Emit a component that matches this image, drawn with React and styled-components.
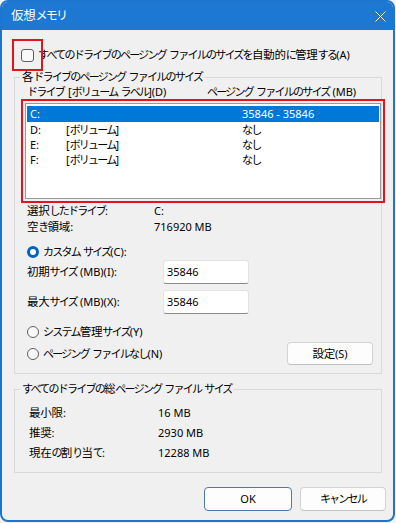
import React from 'react'
import styled, { createGlobalStyle } from 'styled-components'

const GlobalStyle = createGlobalStyle`
  html, body {
    margin: 0;
    padding: 0;
    background: #f3f3f3;
  }
  body {
    font-family: "Noto Sans", "Noto Sans CJK JP", sans-serif;
    font-size: 11px;
    color: #000;
  }
`

// Japanese runs: kana is set tighter than kanji, close to Yu Gothic UI widths
const Kana = styled.span`
  font-family: "Noto Sans CJK JP", sans-serif;
  font-size: ${p => p.$size || 11}px;
  letter-spacing: -1.75px;
  line-height: 1;
`

const Kanji = styled.span`
  font-family: "Noto Sans CJK JP", sans-serif;
  font-size: ${p => (p.$size ? p.$size + 0.5 : 11.5)}px;
  letter-spacing: -0.2px;
  line-height: 1;
`

const KANA = /[\u3040-\u30ff]/
const KANJI = /[\u4e00-\u9fff]/

function J({ children, size }) {
  const runs = []
  let buf = ''
  let kind = null
  const flush = () => {
    if (!buf) return
    const key = runs.length
    if (kind === 'kana') runs.push(<Kana key={key} $size={size}>{buf}</Kana>)
    else if (kind === 'kanji') runs.push(<Kanji key={key} $size={size}>{buf}</Kanji>)
    else runs.push(<React.Fragment key={key}>{buf}</React.Fragment>)
    buf = ''
  }
  for (const ch of String(children)) {
    const k = KANA.test(ch) ? 'kana' : KANJI.test(ch) ? 'kanji' : 'latin'
    if (k !== kind) flush()
    kind = k
    buf += ch
  }
  flush()
  return <>{runs}</>
}

const Window = styled.div`
  width: 395px;
  height: 522px;
  box-sizing: border-box;
  border: 2px solid #1c76cf;
  border-radius: 8px;
  overflow: hidden;
  display: flex;
  flex-direction: column;
  background: #f0f0f0;
`

const TitleBar = styled.div`
  height: 28px;
  flex: none;
  background: #1c78d2;
  color: #fff;
  display: flex;
  align-items: center;
  justify-content: space-between;
  padding: 0 7px 0 9px;
  line-height: 16px;
  svg {
    display: block;
  }
`

const Body = styled.div`
  flex: 1;
  padding: 0 7px 0 12px;
  display: flex;
  flex-direction: column;
`

const CheckRow = styled.label`
  margin: 18px 0 0 7px;
  height: 14px;
  display: flex;
  align-items: center;
  gap: 4px;
  line-height: 14px;
  white-space: nowrap;
`

const Marked = styled.span`
  position: relative;
  display: inline-flex;
  &::after {
    content: '';
    position: absolute;
    inset: ${p => p.$inset};
    border: 2px solid #e3141b;
    pointer-events: none;
  }
`

const CheckBox = styled.span`
  width: 13px;
  height: 13px;
  box-sizing: border-box;
  border: 1px solid #5f5f5f;
  border-radius: 3px;
  background: #f9f9f9;
`

const Group = styled.fieldset`
  margin: ${p => p.$top}px 4px 0 0;
  padding: 0;
  border: 1px solid #d9d9d9;
  min-width: 0;
  legend {
    margin-left: 5px;
    padding: 0 2px;
    line-height: 14px;
    white-space: nowrap;
  }
`

const GroupBody = styled.div`
  padding: ${p => p.$pad};
`

const HeaderRow = styled.div`
  display: grid;
  grid-template-columns: 41px 139px 1fr;
  line-height: 14px;
  height: 14px;
  white-space: nowrap;
`

const ListWrap = styled(Marked)`
  display: block;
  margin: 4px 0 0 -2px;
`

const ListBox = styled.div`
  height: 96px;
  box-sizing: border-box;
  border: 1px solid #9a9a9a;
  background: #fff;
  padding: 2px 1px 0;
`

const DriveRow = styled.div`
  display: grid;
  grid-template-columns: 36px 176px 1fr;
  padding-left: 3px;
  height: 15px;
  line-height: 15px;
  white-space: nowrap;
  background: ${p => (p.$selected ? '#0078d7' : 'transparent')};
  color: ${p => (p.$selected ? '#fff' : '#000')};
  &:first-child {
    height: 16px;
    line-height: 16px;
  }
`

const InfoRow = styled.div`
  display: grid;
  grid-template-columns: ${p => p.$label}px 1fr;
  line-height: ${p => p.$lh}px;
  height: ${p => p.$lh}px;
  margin-top: ${p => p.$top || 0}px;
  white-space: nowrap;
`

const RadioRow = styled.label`
  display: flex;
  align-items: center;
  gap: 4px;
  height: 16px;
  line-height: 16px;
  margin-top: ${p => p.$top}px;
  white-space: nowrap;
`

const Radio = styled.span`
  width: 12px;
  height: 12px;
  box-sizing: border-box;
  border-radius: 50%;
  border: ${p => (p.$on ? '3.5px solid #0065c2' : '1px solid #5f5f5f')};
  background: ${p => (p.$on ? '#fff' : '#f9f9f9')};
`

const SizeRow = styled.div`
  display: grid;
  grid-template-columns: 136px 86px;
  align-items: center;
  margin-top: ${p => p.$top}px;
  white-space: nowrap;
  line-height: 14px;
`

const TextInput = styled.div`
  height: 24px;
  box-sizing: border-box;
  background: #fff;
  border: 1px solid #e2e2e2;
  border-bottom-color: #8a8a8a;
  border-radius: 3px;
  padding: 4px 0 0 3px;
  line-height: 14px;
`

const BottomRow = styled.div`
  display: flex;
  align-items: center;
  justify-content: space-between;
  margin: 2px 8px 0 0;
`

const Button = styled.button`
  font: inherit;
  color: #000;
  width: ${p => p.$w}px;
  height: ${p => p.$h}px;
  box-sizing: border-box;
  background: #fdfdfd;
  border: 1px solid ${p => (p.$default ? '#4f7aa3' : '#d3d3d3')};
  border-bottom-color: ${p => (p.$default ? '#4f7aa3' : '#c2c2c2')};
  border-radius: 4px;
  padding: 0;
  line-height: 14px;
`

const Footer = styled.div`
  display: flex;
  justify-content: flex-end;
  gap: 8px;
  margin-top: 14px;
`

const drives = [
  { d: 'C:', label: '', size: '35846 - 35846' },
  { d: 'D:', label: '[ボリューム]', size: 'なし' },
  { d: 'E:', label: '[ボリューム]', size: 'なし' },
  { d: 'F:', label: '[ボリューム]', size: 'なし' },
]

const totals = [
  ['最小限:', '16 MB'],
  ['推奨:', '2930 MB'],
  ['現在の割り当て:', '12288 MB'],
]

export default function App() {
  return (
    <>
      <GlobalStyle />
      <Window>
        <TitleBar>
          <span><J size={12}>仮想メモリ</J></span>
          <svg width="11" height="11" viewBox="0 0 11 11">
            <path d="M0.5 0.5 L10.5 10.5 M10.5 0.5 L0.5 10.5" stroke="#fff" strokeWidth="1" />
          </svg>
        </TitleBar>
        <Body>
          <CheckRow>
            <Marked $inset="-10px -9px -9px -9px">
              <CheckBox />
            </Marked>
            <span><J>すべてのドライブのページング ファイルのサイズを自動的に管理する(A)</J></span>
          </CheckRow>

          <Group $top={8}>
            <legend><J>各ドライブのページング ファイルのサイズ</J></legend>
            <GroupBody $pad="1px 0 8px 12px">
              <HeaderRow>
                <span><J>ドライブ</J></span>
                <span><J>[ボリューム ラベル](D)</J></span>
                <span><J>ページング ファイルのサイズ (MB)</J></span>
              </HeaderRow>
              <ListWrap $inset="-4px">
                <ListBox>
                  {drives.map((r, i) => (
                    <DriveRow key={r.d} $selected={i === 0}>
                      <span>{r.d}</span>
                      <span><J>{r.label}</J></span>
                      <span><J>{r.size}</J></span>
                    </DriveRow>
                  ))}
                </ListBox>
              </ListWrap>
              <InfoRow $label={127} $lh={16} $top={4}>
                <span><J>選択したドライブ:</J></span>
                <span>C:</span>
              </InfoRow>
              <InfoRow $label={127} $lh={16}>
                <span><J>空き領域:</J></span>
                <span>716920 MB</span>
              </InfoRow>
              <RadioRow $top={9}>
                <Radio $on />
                <span><J>カスタム サイズ(C):</J></span>
              </RadioRow>
              <SizeRow $top={0}>
                <span><J>初期サイズ (MB)(I):</J></span>
                <TextInput>35846</TextInput>
              </SizeRow>
              <SizeRow $top={6}>
                <span><J>最大サイズ (MB)(X):</J></span>
                <TextInput>35846</TextInput>
              </SizeRow>
              <RadioRow $top={10}>
                <Radio />
                <span><J>システム管理サイズ(Y)</J></span>
              </RadioRow>
              <BottomRow>
                <RadioRow $top={0}>
                  <Radio />
                  <span><J>ページング ファイルなし(N)</J></span>
                </RadioRow>
                <Button $w={86} $h={23}><J>設定(S)</J></Button>
              </BottomRow>
            </GroupBody>
          </Group>

          <Group $top={8}>
            <legend><J>すべてのドライブの総ページング ファイル サイズ</J></legend>
            <GroupBody $pad="7px 0 9px 14px">
              {totals.map(([k, v]) => (
                <InfoRow key={k} $label={129} $lh={20}>
                  <span><J>{k}</J></span>
                  <span>{v}</span>
                </InfoRow>
              ))}
            </GroupBody>
          </Group>

          <Footer>
            <Button $default $w={88} $h={24}>OK</Button>
            <Button $w={86} $h={24}><J>キャンセル</J></Button>
          </Footer>
        </Body>
      </Window>
    </>
  )
}
